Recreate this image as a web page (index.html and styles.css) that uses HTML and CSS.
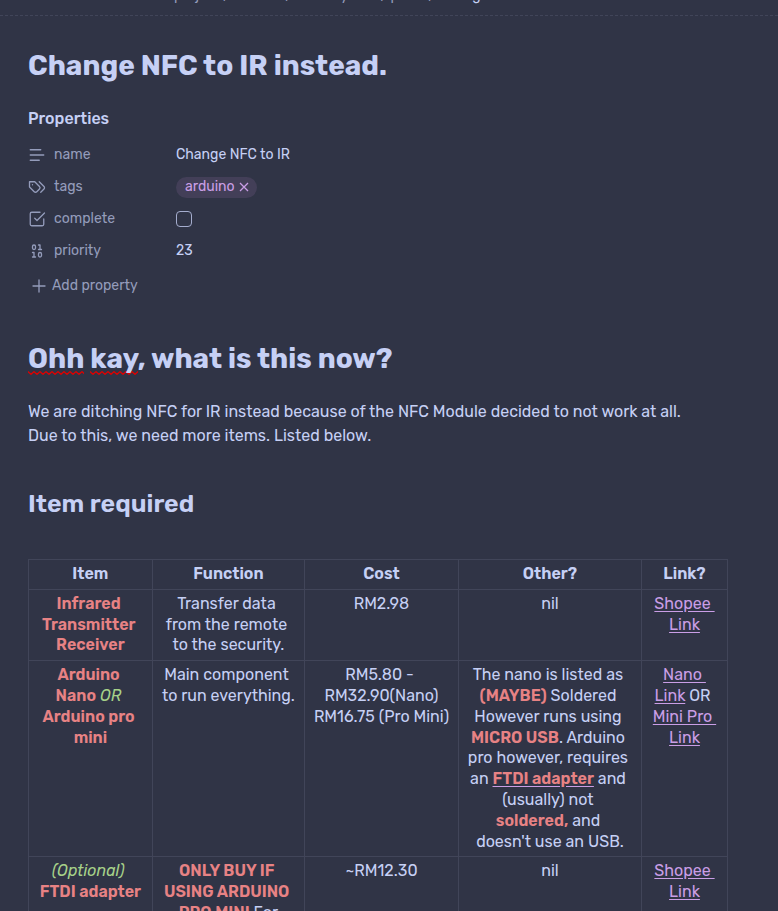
FILE: index.html
```html
<!DOCTYPE html>
<html lang="en">
<head>
<meta charset="utf-8">
<meta name="viewport" content="width=device-width, initial-scale=1">
<title>Change NFC to IR</title>
<link rel="stylesheet" href="styles.css">
</head>
<body>
<header class="view-header">
  <nav class="breadcrumbs" aria-label="Breadcrumb">
    <span>project</span><span>/</span><span>arduino</span><span>/</span><span>security lock</span><span>/</span><span>plans</span><span>/</span><span class="current">Change NFC to IR instead</span>
  </nav>
</header>
<main class="note">
  <h1 class="title">Change NFC to IR instead.</h1>

  <section class="properties">
    <h2 class="properties-heading">Properties</h2>
    <div class="property">
      <svg class="icon" viewBox="0 0 24 24"><path d="M21 12H3M17 5H3M15 19H3"/></svg>
      <span class="key">name</span>
      <span class="value">Change NFC to IR</span>
    </div>
    <div class="property">
      <svg class="icon" viewBox="0 0 24 24"><path d="M9 5H2v7l6.29 6.29c.94.94 2.48.94 3.42 0l3.58-3.58c.94-.94.94-2.48 0-3.42L9 5Z"/><path d="M6 9.01V9"/><path d="m15 5 6.3 6.3a2.4 2.4 0 0 1 0 3.4L17 19"/></svg>
      <span class="key">tags</span>
      <span class="value"><span class="tag">arduino<button class="tag-remove" type="button" aria-label="Remove arduino"><svg viewBox="0 0 10 10"><path d="M1 1l8 8M9 1l-8 8"/></svg></button></span></span>
    </div>
    <div class="property">
      <svg class="icon" viewBox="0 0 24 24"><path d="m9 11 3 3L22 4"/><path d="M21 12v7a2 2 0 0 1-2 2H5a2 2 0 0 1-2-2V5a2 2 0 0 1 2-2h11"/></svg>
      <label class="key" for="complete">complete</label>
      <span class="value"><input class="checkbox" type="checkbox" id="complete"></span>
    </div>
    <div class="property">
      <svg class="icon" viewBox="0 0 24 24"><rect x="14" y="14" width="4" height="6" rx="2"/><rect x="6" y="4" width="4" height="6" rx="2"/><path d="M6 20h4M14 10h4M6 14h2v6M14 4h2v6"/></svg>
      <span class="key">priority</span>
      <span class="value">23</span>
    </div>
    <button class="add-property" type="button"><svg class="icon" viewBox="0 0 24 24"><path d="M12 4v16M4 12h16"/></svg>Add property</button>
  </section>

  <h1 class="heading"><span class="misspelled">Ohh</span> <span class="misspelled">kay</span>, what is this now?</h1>
  <p class="text">We are ditching NFC for IR instead because of the NFC Module decided to not work at all.<br>Due to this, we need more items. Listed below.</p>

  <h2 class="subheading">Item required</h2>
  <table class="items">
    <colgroup><col class="c-item"><col class="c-function"><col class="c-cost"><col class="c-other"><col class="c-link"></colgroup>
    <thead>
      <tr><th>Item</th><th>Function</th><th>Cost</th><th>Other?</th><th>Link?</th></tr>
    </thead>
    <tbody>
      <tr>
        <td><strong>Infrared Transmitter Receiver</strong></td>
        <td>Transfer data from the remote to the security.</td>
        <td>RM2.98</td>
        <td>nil</td>
        <td><a href="#">Shopee Link</a></td>
      </tr>
      <tr>
        <td><strong>Arduino Nano</strong> <em>OR</em> <strong>Arduino pro mini</strong></td>
        <td>Main component to run everything.</td>
        <td>RM5.80 - RM32.90(Nano)<br>RM16.75 (Pro Mini)</td>
        <td>The nano is listed as <strong>(MAYBE)</strong> Soldered However runs using <strong>MICRO USB</strong>. Arduino pro however, requires an <a href="#"><strong>FTDI adapter</strong></a> and (usually) not <strong>soldered,</strong> and doesn't use an USB.</td>
        <td><a href="#">Nano Link</a> OR <a href="#">Mini Pro Link</a></td>
      </tr>
      <tr>
        <td><em>(Optional)</em> <strong>FTDI adapter</strong></td>
        <td><strong>ONLY BUY IF USING ARDUINO PRO MINI</strong> For</td>
        <td>~RM12.30</td>
        <td>nil</td>
        <td><a href="#">Shopee Link</a></td>
      </tr>
    </tbody>
  </table>
</main>
</body>
</html>
```
FILE: styles.css
```css
:root {
  --base: #303446;
  --text: #c6d0f5;
  --muted: #949cbb;
  --line: #414559;
  --mauve: #ca9ee6;
  --red: #e78284;
  --green: #a6d189;
}

* { box-sizing: border-box; }

html { height: 100%; overflow: hidden; }

body {
  margin: 0;
  background: var(--base);
  color: var(--text);
  font-family: Rubik, Roboto, sans-serif;
  font-size: 16px;
  line-height: 24px;
}

.view-header {
  display: flex;
  justify-content: center;
  align-items: flex-end;
  height: 16px;
  padding-bottom: 9px;
  overflow: hidden;
  border-bottom: 1px dashed var(--line);
}

.breadcrumbs {
  display: flex;
  gap: 3px;
  color: var(--muted);
  font-size: 14px;
  line-height: 20px;
}

.breadcrumbs .current { color: var(--text); }

.note { padding: 32px 50px 0 28px; }

h1, h2, p { margin: 0; }

.title, .heading {
  font-size: 28px;
  line-height: 36px;
  font-weight: 700;
}

.properties { margin-top: 22px; }

.properties-heading {
  margin-bottom: 7px;
  font-size: 16px;
  line-height: 26px;
  font-weight: 500;
}

.property {
  display: flex;
  align-items: center;
  height: 32px;
  font-size: 14px;
}

.icon {
  flex: none;
  width: 18px;
  height: 18px;
  fill: none;
  stroke: var(--muted);
  stroke-width: 1.75;
  stroke-linecap: round;
  stroke-linejoin: round;
}

.key {
  width: 122px;
  margin-left: 8px;
  color: var(--muted);
}

.value { display: flex; }

.tag {
  display: flex;
  align-items: center;
  gap: 4px;
  height: 21px;
  padding: 0 8px 0 9px;
  border-radius: 11px;
  background: #433f58;
  color: var(--mauve);
}

.tag-remove {
  display: flex;
  padding: 0;
  border: 0;
  background: none;
  color: inherit;
}

.tag-remove svg {
  width: 10px;
  height: 10px;
  fill: none;
  stroke: currentColor;
  stroke-width: 1.3;
}

.checkbox {
  appearance: none;
  width: 16px;
  height: 16px;
  margin: 0;
  border: 1px solid #a5adce;
  border-radius: 4px;
}

.add-property {
  display: flex;
  align-items: center;
  gap: 4px;
  margin-top: 5px;
  padding: 0 2px;
  border: 0;
  background: none;
  color: var(--muted);
  font: inherit;
  font-size: 14px;
  line-height: 28px;
}

.heading { margin-top: 41px; }

/* Spell-check squiggle under a word */
.misspelled {
  background: url("data:image/svg+xml,%3Csvg xmlns='http://www.w3.org/2000/svg' width='6' height='4'%3E%3Cpath d='M-3 3.3L0 .7L3 3.3L6 .7L9 3.3' fill='none' stroke='%23e00000' stroke-width='1.3'/%3E%3C/svg%3E") 0 100% / 6px 4px repeat-x;
}

.text { margin-top: 23px; }

.subheading {
  margin: 40px 0 39px;
  font-size: 25px;
  line-height: 32px;
  font-weight: 600;
}

.items {
  width: 100%;
  table-layout: fixed;
  border-collapse: collapse;
  line-height: 1.3;
  text-align: center;
}

.c-item { width: 17.7%; }
.c-function { width: 21.8%; }
.c-cost { width: 22%; }
.c-other { width: 26.2%; }
.c-link { width: 12.3%; }

.items th, .items td {
  padding: 4px 8px;
  border: 1px solid var(--line);
  vertical-align: top;
  white-space: break-spaces;
}

.items th { font-weight: 600; }

strong { color: var(--red); font-weight: 600; }
em { color: var(--green); }
a { color: var(--mauve); text-underline-offset: 2px; }
```
